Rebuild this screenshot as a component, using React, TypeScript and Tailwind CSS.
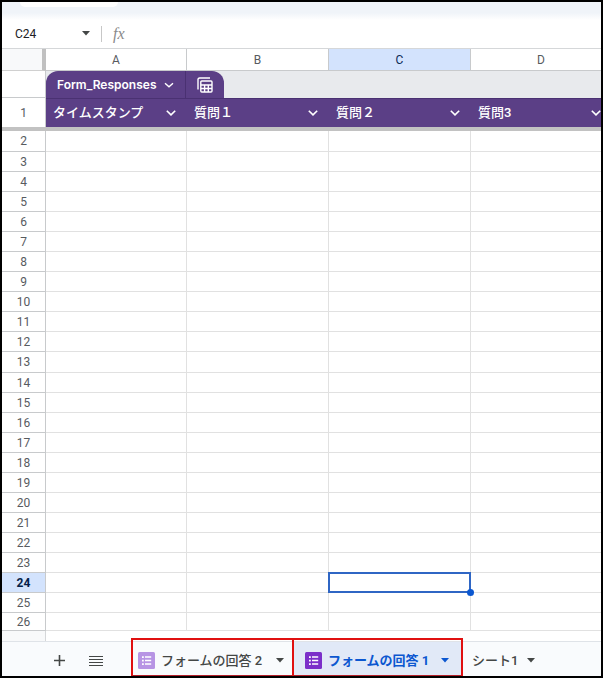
import React from "react";

const CJK = "font-['Roboto','Noto_Sans_CJK_JP',sans-serif]";

function Caret({ className = "" }: { className?: string }) {
  return (
    <svg viewBox="0 0 8 5" className={`h-[5px] w-2 shrink-0 fill-current ${className}`} aria-hidden="true">
      <path d="M0 0h8L4 4.5z" />
    </svg>
  );
}

function Chevron() {
  return (
    <svg viewBox="0 0 10 6" className="h-[6px] w-[10px]" fill="none" stroke="currentColor" strokeWidth="1.6" aria-hidden="true">
      <path d="M0.8 0.7 5 4.9 9.2 0.7" />
    </svg>
  );
}

function SmallChevron() {
  return (
    <svg viewBox="0 0 10 6" className="h-[6px] w-[10px]" fill="none" stroke="currentColor" strokeWidth="1.4" aria-hidden="true">
      <path d="M1 1.2 5 4.7 9 1.2" />
    </svg>
  );
}

function TableIcon() {
  return (
    <svg viewBox="0 0 16 16" className="h-4 w-4" fill="none" stroke="currentColor" strokeWidth="1.4" aria-hidden="true">
      <path d="M1 12.5V2.6Q1 1 2.6 1H13" />
      <rect x="3.8" y="4" width="11.2" height="11" rx="1" />
      <path d="M3.8 8H15M3.8 11.5H15M7.6 8V15M11.3 8V15" />
    </svg>
  );
}

function FormIcon({ className }: { className: string }) {
  return (
    <svg viewBox="0 0 17 17" className={`h-[17px] w-[17px] shrink-0 ${className}`} aria-hidden="true">
      <rect width="17" height="17" rx="1.5" fill="currentColor" />
      <path
        d="M4 4.2h1.8v1.8H4zM4 7.7h1.8v1.8H4zM4 11.2h1.8V13H4zM7 4.2h6.2v1.6H7zM7 7.7h6.2v1.6H7zM7 11.2h6.2v1.6H7z"
        fill="#fff"
      />
    </svg>
  );
}

const columns = ["A", "B", "C", "D"];
const questions = ["タイムスタンプ", "質問１", "質問２", "質問3"];
const rows = Array.from({ length: 25 }, (_, i) => i + 2);

function Sheet() {
  return (
    <table className="w-[calc(100%+11px)] table-fixed border-separate border-spacing-0 text-xs text-[#575b5f]">
      <colgroup>
        <col className="w-11" />
        <col className="w-[141px]" />
        <col className="w-[142px]" />
        <col className="w-[142px]" />
        <col />
      </colgroup>
      <thead>
        <tr className="h-[22px]">
          <td className="border-r-4 border-b border-[#c0c0c0] border-b-[#d0d0d0] bg-[#f8f9fa] p-0" />
          {columns.map((c) => (
            <th
              key={c}
              scope="col"
              className={`border-r border-b border-[#c8cacc] p-0 font-normal ${c === "C" ? "bg-[#d3e3fd] text-[#0b2a57]" : "bg-white"}`}
            >
              {c}
            </th>
          ))}
        </tr>
        <tr className="h-[27px]">
          <td className="border-r border-b border-[#c8cacc] p-0" />
          <td colSpan={4} className="bg-[#e8eaed] p-0">
            <div className="flex h-[27px] w-[178px] overflow-hidden rounded-t-xl bg-[#5b3f86] text-white">
              <button className="flex w-[140px] items-center justify-between border-r border-[#4a3172] pr-[11px] pl-[11px] font-['Inter',sans-serif] text-xs font-semibold">
                Form_Responses
                <SmallChevron />
              </button>
              <button aria-label="Table views" className="flex flex-1 items-center justify-center">
                <TableIcon />
              </button>
            </div>
          </td>
        </tr>
        <tr className="h-[29px]">
          <th scope="row" className="border-r border-[#c8cacc] p-0 font-normal">1</th>
          {questions.map((q) => (
            <th key={q} scope="col" className="border-t border-[#4a3172] bg-[#5b3f86] p-0 font-medium text-white">
              <div className={`flex items-center justify-between pr-[11px] pl-[7px] text-[13px] leading-5 ${CJK}`}>
                {q}
                <button aria-label={`${q} menu`}>
                  <Chevron />
                </button>
              </div>
            </th>
          ))}
        </tr>
      </thead>
      <tbody>
        <tr className="h-1">
          <td colSpan={5} className="bg-[#c2c2c2] p-0" />
        </tr>
        {rows.map((n) => {
          const height = n === 2 || n === 13 ? "h-[21px]" : n === 26 ? "h-[18px]" : "h-5";
          return (
            <tr key={n} className={height}>
              <th
                scope="row"
                className={`border-r border-b border-[#c8cacc] p-0 leading-4 ${n === 24 ? "bg-[#d3e3fd] font-bold text-[#041e49]" : "font-normal"}`}
              >
                {n}
              </th>
              {columns.map((c) => {
                const selected = n === 24 && c === "C";
                return (
                  <td key={c} className={`relative border-r border-b border-[#e1e1e1] p-0 ${selected ? "z-10" : ""}`}>
                    {selected && (
                      <div className="absolute -inset-px border-2 border-[#2f66c4]">
                        <span className="absolute -right-[5px] -bottom-[5px] h-[7px] w-[7px] rounded-full bg-[#0b57d0]" />
                      </div>
                    )}
                  </td>
                );
              })}
            </tr>
          );
        })}
        <tr className="h-[10px]">
          <td className="border-r border-[#d5d7d9] bg-[#f8f9fa] p-0" />
          <td colSpan={4} className="p-0" />
        </tr>
      </tbody>
    </table>
  );
}

export default function App() {
  return (
    <div className="overflow-hidden border-2 border-black bg-white font-['Roboto',sans-serif]">
      <div className="h-[18px] bg-linear-to-b from-[#f0f4f9] from-60% to-white pl-[18px]">
        <div className="h-[5px] w-[98px] rounded-b-full bg-white" />
      </div>
      <div className="flex h-[29px] items-center border-b border-[#d5d7d9] pb-px">
        <input aria-label="Name box" defaultValue="C24" className="w-20 bg-transparent pl-[13px] text-xs text-[#202124] outline-none" />
        <button aria-label="Named ranges" className="text-[#444746]">
          <Caret />
        </button>
        <span className="ml-[11px] h-4 w-px bg-[#c7c7c7]" />
        <span className="ml-[11px] font-['Liberation_Serif',serif] text-base leading-5 text-[#8a8a8a] italic">fx</span>
      </div>

      <Sheet />

      <footer className={`flex h-[35px] border-t border-[#dfe3e8] bg-[#f9fbfd] text-[13px] text-[#444746] ${CJK}`}>
        <div className="flex w-[129px] items-center gap-6 pt-[3px] pl-[52px]">
          <button aria-label="Add sheet">
            <svg viewBox="0 0 11 11" className="h-[11px] w-[11px]" stroke="currentColor" strokeWidth="1.6" aria-hidden="true">
              <path d="M5.5 0v11M0 5.5h11" />
            </svg>
          </button>
          <button aria-label="All sheets">
            <svg viewBox="0 0 14 10" className="h-[10px] w-[14px]" stroke="currentColor" strokeWidth="1" aria-hidden="true">
              <path d="M0 0.5h14M0 3.5h14M0 6.5h14M0 9.5h14" />
            </svg>
          </button>
        </div>
        <button className="relative flex w-[161px] items-center pt-[3px] pr-2 pl-[7px] font-medium">
          <span className="absolute -top-1 right-[-2px] -bottom-[2px] left-0 border-2 border-b-3 border-[#e01010] border-b-[#b5202a]" />
          <FormIcon className="text-[#b794e4]" />
          <span className="ml-[6px]">フォームの回答 2</span>
          <Caret className="ml-auto" />
        </button>
        <button className="relative flex w-[171px] items-center bg-[#e1e9f7] pt-[3px] pr-[14px] pl-[13px] font-bold text-[#0b57d0]">
          <span className="absolute -top-1 right-0 -bottom-[2px] left-0 border-2 border-b-3 border-[#e01010] border-b-[#b5202a]" />
          <FormIcon className="text-[#7b2fc9]" />
          <span className="ml-[6px]">フォームの回答 1</span>
          <Caret className="ml-auto" />
        </button>
        <button className="flex items-center gap-[9px] pt-[3px] pl-[9px] font-medium">
          シート1
          <Caret />
        </button>
      </footer>
    </div>
  );
}
